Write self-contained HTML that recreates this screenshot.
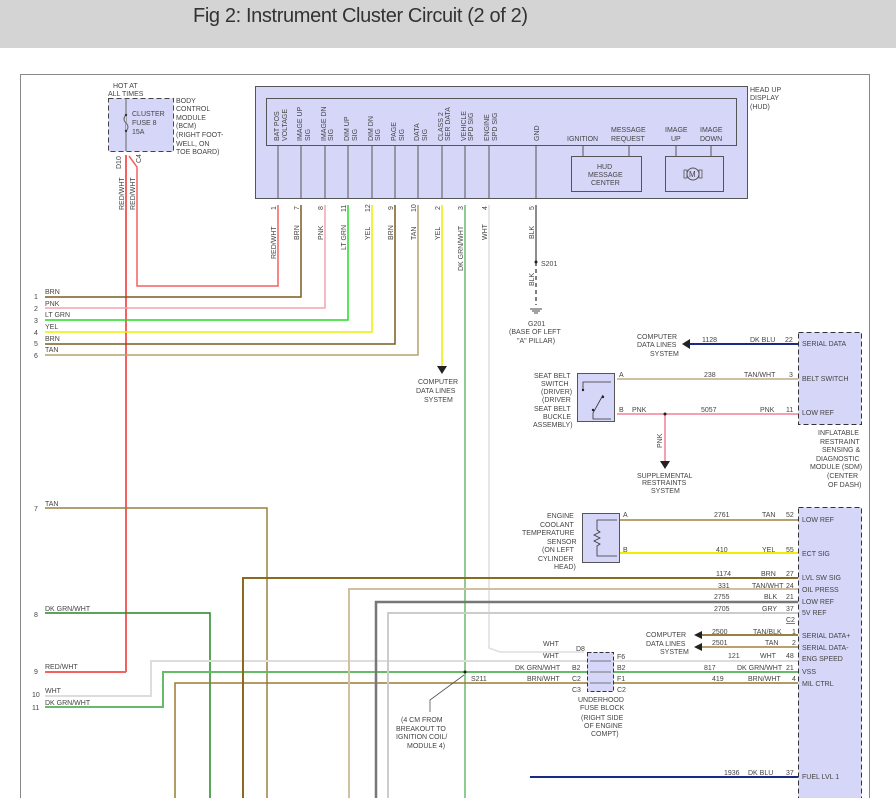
<!DOCTYPE html>
<html><head><meta charset="utf-8"><style>
html,body{margin:0;padding:0;background:#fff;}
svg{display:block}
text{font-family:"Liberation Sans",sans-serif;font-size:7px;fill:#444}
</style></head><body>
<svg width="896" height="798" viewBox="0 0 896 798" xmlns="http://www.w3.org/2000/svg">
<rect x="0" y="0" width="896" height="48" fill="#d4d4d4"/>
<text x="193" y="22" style="font-size:20px;fill:#333" textLength="335">Fig 2: Instrument Cluster Circuit (2 of 2)</text>
<rect x="20.5" y="74.5" width="849" height="740" fill="#fff" stroke="#888" stroke-width="1"/>

<!-- BCM fuse -->
<rect x="108.5" y="98.5" width="65" height="53" fill="#d6d6f8" stroke="#444" stroke-dasharray="5,3"/>
<line x1="126" y1="98" x2="126" y2="151" stroke="#666"/>
<path d="M126 115 q-4 4 0 8 q4 4 0 8" fill="#d6d6f8" stroke="#666"/>
<circle cx="126" cy="115" r="1.2" fill="#333"/><circle cx="126" cy="131" r="1.2" fill="#333"/>
<text x="113" y="88">HOT AT</text><text x="108" y="96">ALL TIMES</text>
<text x="132" y="116">CLUSTER</text><text x="132" y="125">FUSE 8</text><text x="132" y="134">15A</text>
<text x="176" y="103">BODY</text><text x="176" y="111">CONTROL</text><text x="176" y="120">MODULE</text><text x="176" y="128">(BCM)</text><text x="176" y="137">(RIGHT FOOT-</text><text x="176" y="146">WELL, ON</text><text x="176" y="154">TOE BOARD)</text>
<text transform="translate(121,169) rotate(-90)">D10</text>
<text transform="translate(141,163) rotate(-90)">C4</text>
<text transform="translate(124,210) rotate(-90)">RED/WHT</text>
<text transform="translate(135,210) rotate(-90)">RED/WHT</text>
<line x1="126" y1="155" x2="126" y2="672" stroke="#f56060" stroke-width="2"/>
<polyline points="129,156 137,167 137,286 278,286 278,205" fill="none" stroke="#f56060" stroke-width="1.5"/>

<!-- HUD -->
<rect x="255.5" y="86.5" width="492" height="112" fill="#d6d6f8" stroke="#555"/>
<rect x="266.5" y="98.5" width="470" height="47" fill="#d6d6f8" stroke="#555"/>
<text x="750" y="92">HEAD UP</text><text x="750" y="100">DISPLAY</text><text x="750" y="109">(HUD)</text>
<g stroke="#555">
<line x1="278" y1="145" x2="278" y2="198"/><line x1="301" y1="145" x2="301" y2="198"/><line x1="325" y1="145" x2="325" y2="198"/><line x1="348" y1="145" x2="348" y2="198"/><line x1="372" y1="145" x2="372" y2="198"/><line x1="395" y1="145" x2="395" y2="198"/><line x1="418" y1="145" x2="418" y2="198"/><line x1="442" y1="145" x2="442" y2="198"/><line x1="465" y1="145" x2="465" y2="198"/><line x1="489" y1="145" x2="489" y2="198"/><line x1="536" y1="145" x2="536" y2="198"/>
<line x1="583" y1="145" x2="583" y2="156"/><line x1="629" y1="145" x2="629" y2="156"/><line x1="676" y1="145" x2="676" y2="156"/><line x1="711" y1="145" x2="711" y2="156"/>
</g>
<rect x="571.5" y="156.5" width="70" height="35" fill="#d6d6f8" stroke="#555"/>
<rect x="665.5" y="156.5" width="58" height="35" fill="#d6d6f8" stroke="#555"/>
<text x="597" y="169">HUD</text><text x="588" y="177">MESSAGE</text><text x="591" y="185">CENTER</text>
<circle cx="693" cy="174" r="6" fill="none" stroke="#555"/><text x="689" y="177" style="font-size:8px">M</text>
<rect x="684" y="170" width="3" height="8" fill="none" stroke="#555" stroke-width=".8"/><rect x="699" y="170" width="3" height="8" fill="none" stroke="#555" stroke-width=".8"/>
<text x="567" y="141">IGNITION</text><text x="611" y="132">MESSAGE</text><text x="611" y="141">REQUEST</text>
<text x="665" y="132">IMAGE</text><text x="671" y="141">UP</text><text x="700" y="132">IMAGE</text><text x="700" y="141">DOWN</text>
<g>
<text transform="translate(279,141) rotate(-90)">BAT POS</text><text transform="translate(287,141) rotate(-90)">VOLTAGE</text>
<text transform="translate(302,141) rotate(-90)">IMAGE UP</text><text transform="translate(310,141) rotate(-90)">SIG</text>
<text transform="translate(326,141) rotate(-90)">IMAGE DN</text><text transform="translate(333,141) rotate(-90)">SIG</text>
<text transform="translate(349,141) rotate(-90)">DIM UP</text><text transform="translate(357,141) rotate(-90)">SIG</text>
<text transform="translate(373,141) rotate(-90)">DIM DN</text><text transform="translate(380,141) rotate(-90)">SIG</text>
<text transform="translate(396,141) rotate(-90)">PAGE</text><text transform="translate(404,141) rotate(-90)">SIG</text>
<text transform="translate(419,141) rotate(-90)">DATA</text><text transform="translate(427,141) rotate(-90)">SIG</text>
<text transform="translate(443,141) rotate(-90)">CLASS 2</text><text transform="translate(450,141) rotate(-90)">SER DATA</text>
<text transform="translate(466,141) rotate(-90)">VEHICLE</text><text transform="translate(473,141) rotate(-90)">SPD SIG</text>
<text transform="translate(489,141) rotate(-90)">ENGINE</text><text transform="translate(497,141) rotate(-90)">SPD SIG</text>
<text transform="translate(539,141) rotate(-90)">GND</text>
</g>
<!-- pin numbers and wire labels -->
<g>
<text transform="translate(276,210) rotate(-90)">1</text><text transform="translate(299,210) rotate(-90)">7</text><text transform="translate(323,210) rotate(-90)">8</text><text transform="translate(346,212) rotate(-90)">11</text><text transform="translate(370,212) rotate(-90)">12</text><text transform="translate(393,210) rotate(-90)">9</text><text transform="translate(416,212) rotate(-90)">10</text><text transform="translate(440,210) rotate(-90)">2</text><text transform="translate(463,210) rotate(-90)">3</text><text transform="translate(487,210) rotate(-90)">4</text><text transform="translate(534,210) rotate(-90)">5</text>
<text transform="translate(276,259) rotate(-90)">RED/WHT</text><text transform="translate(299,240) rotate(-90)">BRN</text><text transform="translate(323,240) rotate(-90)">PNK</text><text transform="translate(346,250) rotate(-90)">LT GRN</text><text transform="translate(370,240) rotate(-90)">YEL</text><text transform="translate(393,240) rotate(-90)">BRN</text><text transform="translate(416,240) rotate(-90)">TAN</text><text transform="translate(440,240) rotate(-90)">YEL</text><text transform="translate(463,271) rotate(-90)">DK GRN/WHT</text><text transform="translate(487,240) rotate(-90)">WHT</text><text transform="translate(534,239) rotate(-90)">BLK</text>
</g>
<!-- HUD wires -->
<g fill="none" stroke-width="1.5">
<polyline points="301,205 301,297 45,297" stroke="#7a5c1e"/>
<polyline points="325,205 325,308 45,308" stroke="#f5a0b0"/>
<polyline points="348,205 348,320 45,320" stroke="#22dd22"/>
<polyline points="372,205 372,332 45,332" stroke="#eeee00"/>
<polyline points="395,205 395,344 45,344" stroke="#7a5c1e"/>
<polyline points="418,205 418,355 45,355" stroke="#b8a070"/>
<line x1="442" y1="205" x2="442" y2="368" stroke="#eeee00"/>
<line x1="465" y1="205" x2="465" y2="798" stroke="#229922" stroke-width="1"/>
<polyline points="489,205 489,648 500,652 584,652" stroke="#ddd"/>
<line x1="536" y1="205" x2="536" y2="262" stroke="#666"/>
<line x1="536" y1="262" x2="536" y2="305" stroke="#555" stroke-dasharray="4,3"/>
</g>
<path d="M437 366 h10 l-5 8 z" fill="#222"/>
<text x="418" y="384">COMPUTER</text><text x="416" y="393">DATA LINES</text><text x="424" y="402">SYSTEM</text>
<circle cx="536" cy="262" r="1.5" fill="#222"/><text x="541" y="266">S201</text>
<text transform="translate(534,286) rotate(-90)">BLK</text>
<path d="M530 309 h12 M532 311 h8 M534 313 h4" stroke="#444"/>
<text x="528" y="326">G201</text><text x="509" y="334">(BASE OF LEFT</text><text x="517" y="343">"A" PILLAR)</text>
<g font-size="7">
<text x="34" y="299">1</text><text x="45" y="294">BRN</text>
<text x="34" y="311">2</text><text x="45" y="306">PNK</text>
<text x="34" y="323">3</text><text x="45" y="317">LT GRN</text>
<text x="34" y="335">4</text><text x="45" y="329">YEL</text>
<text x="34" y="346">5</text><text x="45" y="341">BRN</text>
<text x="34" y="358">6</text><text x="45" y="352">TAN</text>
<text x="34" y="511">7</text><text x="45" y="506">TAN</text>
<text x="34" y="617">8</text><text x="45" y="611">DK GRN/WHT</text>
<text x="34" y="674">9</text><text x="45" y="669">RED/WHT</text>
<text x="32" y="697">10</text><text x="45" y="693">WHT</text>
<text x="32" y="710">11</text><text x="45" y="705">DK GRN/WHT</text>
</g>

<!-- left wires lower -->
<g fill="none" stroke-width="1.5">
<polyline points="45,508 267,508 267,798" stroke="#9a8040"/>
<polyline points="45,613 210,613 210,798" stroke="#228822"/>
<line x1="45" y1="672" x2="126" y2="672" stroke="#f56060" stroke-width="2"/>
<polyline points="45,696 151,696 151,661 587,661" stroke="#ddd" stroke-width="2"/>
<polyline points="45,707 163,707 163,672 587,672" stroke="#66bb66" stroke-width="2"/>
<polyline points="175,798 175,683 587,683" stroke="#9a7a30"/>
<polyline points="243,798 243,578 798,578" stroke="#8a6a20" stroke-width="2"/>
<polyline points="349,798 349,589 798,589" stroke="#cfc0a0" stroke-width="2"/>
<polyline points="376,798 376,602 798,602" stroke="#777" stroke-width="2.5"/>
<polyline points="388,798 388,613 798,613" stroke="#ccc" stroke-width="2"/>
<line x1="530" y1="777" x2="798" y2="777" stroke="#1a2a80" stroke-width="2"/>
<line x1="613" y1="661" x2="798" y2="661" stroke="#ddd" stroke-width="2"/>
<line x1="613" y1="672" x2="798" y2="672" stroke="#66bb66" stroke-width="2"/>
<line x1="613" y1="683" x2="798" y2="683" stroke="#9a7a30" stroke-width="1.5"/>
<line x1="700" y1="635" x2="798" y2="635" stroke="#9a8040" stroke-width="2"/>
<line x1="700" y1="647" x2="798" y2="647" stroke="#b8a070" stroke-width="2"/>
<line x1="617" y1="520" x2="798" y2="520" stroke="#b8a070" stroke-width="2"/>
<line x1="617" y1="553" x2="798" y2="553" stroke="#eeee00" stroke-width="2"/>
</g>
<circle cx="465" cy="672" r="1.5" fill="#222"/><text x="471" y="681">S211</text>
<polyline points="464,675 430,700 430,712" fill="none" stroke="#555" stroke-width=".8"/>
<text x="401" y="722">(4 CM FROM</text><text x="396" y="731">BREAKOUT TO</text><text x="396" y="739">IGNITION COIL/</text><text x="407" y="748">MODULE 4)</text>
<path d="M694 635 l8 -4 v8 z M694 647 l8 -4 v8 z" fill="#222"/>
<text x="646" y="637">COMPUTER</text><text x="646" y="646">DATA LINES</text><text x="660" y="654">SYSTEM</text>

<!-- underhood fuse block -->
<rect x="587.5" y="652.5" width="26" height="39" fill="#d6d6f8" stroke="#333" stroke-dasharray="4,2"/>
<g stroke="#555" stroke-width=".8"><line x1="590" y1="661" x2="611" y2="661"/><line x1="590" y1="672" x2="611" y2="672"/><line x1="590" y1="683" x2="611" y2="683"/></g>
<text x="543" y="646">WHT</text><text x="543" y="658">WHT</text><text x="515" y="670">DK GRN/WHT</text><text x="527" y="681">BRN/WHT</text>
<text x="576" y="651">D8</text><text x="572" y="670">B2</text><text x="572" y="681">C2</text><text x="572" y="692">C3</text>
<text x="617" y="659">F6</text><text x="617" y="670">B2</text><text x="617" y="681">F1</text><text x="617" y="692">C2</text>
<text x="578" y="702">UNDERHOOD</text><text x="580" y="710">FUSE BLOCK</text><text x="581" y="720">(RIGHT SIDE</text><text x="584" y="728">OF ENGINE</text><text x="591" y="736">COMPT)</text>

<!-- SDM -->
<rect x="798.5" y="332.5" width="63" height="92" fill="#d6d6f8" stroke="#333" stroke-dasharray="5,3"/>
<line x1="690" y1="344" x2="798" y2="344" stroke="#1a2a80" stroke-width="2"/>
<path d="M682 344 l8 -5 v10 z" fill="#222"/>
<line x1="617" y1="379" x2="798" y2="379" stroke="#cfc0a0" stroke-width="2"/>
<line x1="617" y1="414" x2="798" y2="414" stroke="#f5a0b0" stroke-width="2"/>
<line x1="665" y1="414" x2="665" y2="462" stroke="#f5a0b0" stroke-width="2"/>
<circle cx="665" cy="414" r="1.5" fill="#222"/>
<path d="M660 461 h10 l-5 8 z" fill="#222"/>
<text transform="translate(662,448) rotate(-90)">PNK</text>
<text x="637" y="478">SUPPLEMENTAL</text><text x="642" y="485">RESTRAINTS</text><text x="651" y="493">SYSTEM</text>
<text x="637" y="339">COMPUTER</text><text x="637" y="347">DATA LINES</text><text x="650" y="356">SYSTEM</text>
<text x="702" y="342">1128</text><text x="750" y="342">DK BLU</text><text x="785" y="342">22</text>
<text x="704" y="377">238</text><text x="744" y="377">TAN/WHT</text><text x="789" y="377">3</text>
<text x="632" y="412">PNK</text><text x="701" y="412">5057</text><text x="760" y="412">PNK</text><text x="786" y="412">11</text>
<text x="802" y="346">SERIAL DATA</text><text x="802" y="381">BELT SWITCH</text><text x="802" y="415">LOW REF</text>
<text x="818" y="435">INFLATABLE</text><text x="820" y="444">RESTRAINT</text><text x="822" y="452">SENSING &amp;</text><text x="816" y="461">DIAGNOSTIC</text><text x="810" y="469">MODULE (SDM)</text><text x="827" y="478">(CENTER</text><text x="828" y="487">OF DASH)</text>
<!-- seat belt -->
<rect x="577.5" y="373.5" width="37" height="48" fill="#d6d6f8" stroke="#555"/>
<path d="M583 390 v-8 h28 M603 395 l-10 18 v6 h18" fill="none" stroke="#333" stroke-width=".8"/>
<circle cx="583" cy="390" r="1.2" fill="#222"/><circle cx="603" cy="397" r="1.2" fill="#222"/><circle cx="593" cy="410" r="1.2" fill="#222"/>
<text x="619" y="377">A</text><text x="619" y="412">B</text>
<text x="534" y="378">SEAT BELT</text><text x="541" y="386">SWITCH</text><text x="541" y="394">(DRIVER)</text><text x="542" y="402">(DRIVER</text><text x="534" y="411">SEAT BELT</text><text x="543" y="419">BUCKLE</text><text x="533" y="427">ASSEMBLY)</text>
<!-- ECT sensor -->
<rect x="582.5" y="513.5" width="37" height="49" fill="#d6d6f8" stroke="#555"/>
<path d="M617 520 h-20 v10 l3 2 -6 3 6 3 -6 3 6 3 -3 2 v10 h20" fill="none" stroke="#333" stroke-width=".8"/>
<text x="623" y="517">A</text><text x="623" y="552">B</text>
<text x="547" y="518">ENGINE</text><text x="540" y="527">COOLANT</text><text x="522" y="535">TEMPERATURE</text><text x="547" y="544">SENSOR</text><text x="542" y="552">(ON LEFT</text><text x="538" y="561">CYLINDER</text><text x="554" y="569">HEAD)</text>
<!-- ECM -->
<rect x="798.5" y="507.5" width="63" height="300" fill="#d6d6f8" stroke="#333" stroke-dasharray="5,3"/>
<g>
<text x="802" y="522">LOW REF</text><text x="802" y="556">ECT SIG</text><text x="802" y="580">LVL SW SIG</text><text x="802" y="592">OIL PRESS</text><text x="802" y="604">LOW REF</text><text x="802" y="615">5V REF</text>
<text x="802" y="638">SERIAL DATA+</text><text x="802" y="650">SERIAL DATA-</text><text x="802" y="661">ENG SPEED</text><text x="802" y="674">VSS</text><text x="802" y="686">MIL CTRL</text><text x="802" y="779">FUEL LVL 1</text>
<text x="714" y="517">2761</text><text x="762" y="517">TAN</text><text x="786" y="517">52</text>
<text x="716" y="552">410</text><text x="762" y="552">YEL</text><text x="786" y="552">55</text>
<text x="716" y="576">1174</text><text x="761" y="576">BRN</text><text x="786" y="576">27</text>
<text x="718" y="588">331</text><text x="752" y="588">TAN/WHT</text><text x="786" y="588">24</text>
<text x="714" y="599">2755</text><text x="764" y="599">BLK</text><text x="786" y="599">21</text>
<text x="714" y="611">2705</text><text x="762" y="611">GRY</text><text x="786" y="611">37</text>
<text x="786" y="622" text-decoration="underline">C2</text>
<text x="712" y="634">2500</text><text x="753" y="634">TAN/BLK</text><text x="792" y="634">1</text>
<text x="712" y="645">2501</text><text x="765" y="645">TAN</text><text x="792" y="645">2</text>
<text x="728" y="658">121</text><text x="760" y="658">WHT</text><text x="786" y="658">48</text>
<text x="704" y="670">817</text><text x="737" y="670">DK GRN/WHT</text><text x="786" y="670">21</text>
<text x="712" y="681">419</text><text x="748" y="681">BRN/WHT</text><text x="792" y="681">4</text>
<text x="724" y="775">1936</text><text x="748" y="775">DK BLU</text><text x="786" y="775">37</text>
</g>
</svg>
</body></html>
